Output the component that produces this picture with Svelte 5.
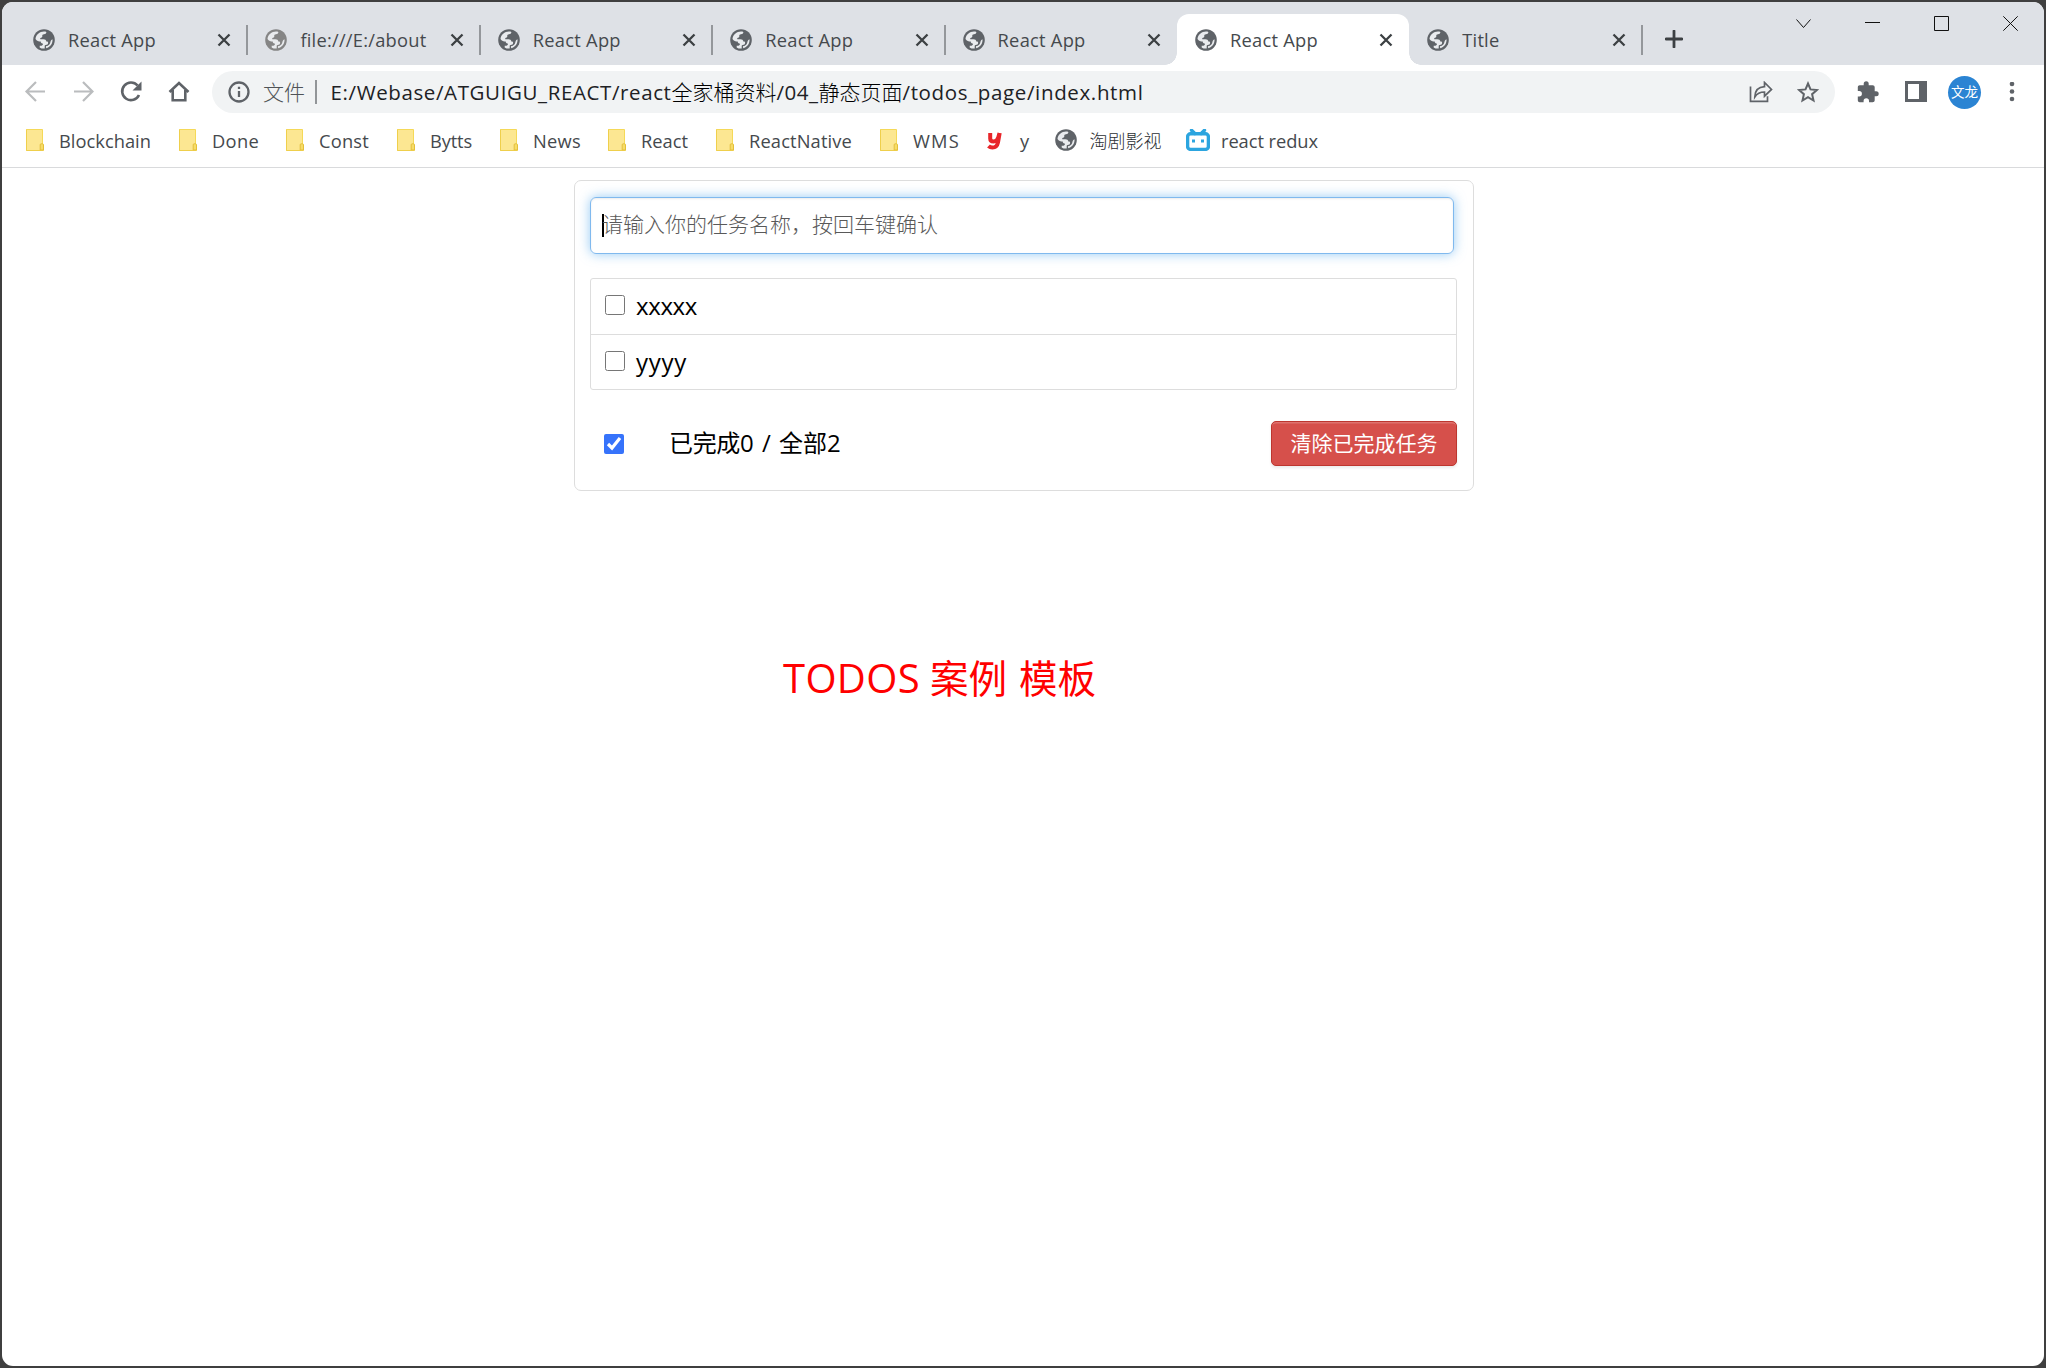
<script>
  const tabs = [
    { title: 'React App', w: 88 },
    { title: 'file:///E:/about', w: 126, muted: true },
    { title: 'React App', w: 88 },
    { title: 'React App', w: 88 },
    { title: 'React App', w: 88 },
    { title: 'React App', w: 88, active: true },
    { title: 'Title', w: 37 }
  ];

  const bookmarks = [
    { label: 'Blockchain', kind: 'folder', w: 92, slot: 153 },
    { label: 'Done', kind: 'folder', w: 47, slot: 107 },
    { label: 'Const', kind: 'folder', w: 50, slot: 111 },
    { label: 'Bytts', kind: 'folder', w: 42, slot: 103 },
    { label: 'News', kind: 'folder', w: 48, slot: 108 },
    { label: 'React', kind: 'folder', w: 47, slot: 108 },
    { label: 'ReactNative', kind: 'folder', w: 103, slot: 164 },
    { label: 'WMS', kind: 'folder', w: 47, slot: 107 },
    { label: 'y', kind: 'y', w: 10, slot: 68 },
    { label: '淘剧影视', kind: 'globe', w: 72, slot: 131 },
    { label: 'react redux', kind: 'tv', w: 97, slot: 140 }
  ];

  const url = [
    { t: 'E:/Webase/ATGUIGU_REACT/react', w: 341 },
    { t: '全家桶资料', w: 105, cjk: true },
    { t: '/04_', w: 42 },
    { t: '静态页面', w: 84, cjk: true },
    { t: '/todos_page/index.html', w: 241 }
  ];

  let todos = $state([
    { name: 'xxxxx', done: false, w: 61 },
    { name: 'yyyy', done: false, w: 51 }
  ]);
  let all = $state(true);

  // Spreads a label's letters so that it occupies the given width.
  function fit(node, width) {
    const natural = node.getBoundingClientRect().width;
    const n = [...node.textContent].length;
    node.style.letterSpacing = `${(width - natural) / n}px`;
  }
</script>

{#snippet globe(muted)}
  <svg class="globe" class:muted viewBox="0 0 22 22">
    <circle cx="11" cy="11" r="10.8" fill="currentColor" />
    <path class="sea" d="M2.5 10C2.800 5.800 6.600 2.500 11 2.500c.9 0 1.700.1 2.400.4-.2 1.500-1 2.200-2.400 2.300-1.300.1-1.900.7-1.700 1.800.1.900-.3 1.600-1.300 1.800-.8.2-.9.600-.7 1.400h3.200c1.700 0 2.700.8 2.800 2.300 1.500 0 1.900.4 1.800 1.500-.1 1.400-1 1.900-2.500 1.900-.6 0-.9.4-.9 1.100v2.500c-1.800.2-3.600-.1-5-1.100v-1.700c2.100.2 3.300-.6 3.400-2-1.500 0-2.300-.8-2.400-2.200-2 0-4-.5-5.200-2.500z" />
    <path class="sea" d="M19.500 10.200c.4 4.200-2.300 8-6.400 9v-2.200c1.700-.1 3.200-1 3.900-2.600.6-1.500.5-3.400 2.500-4.200z" />
  </svg>
{/snippet}

<div class="window">
  <header class="strip">
    <div class="tabs">
      {#each tabs as tab, i}
        <div class="tab" class:active={tab.active} class:nosep={i === 4 || i === 5}>
          {@render globe(tab.muted)}
          <span class="title"><span use:fit={tab.w}>{tab.title}</span></span>
          <svg class="x" viewBox="0 0 14 14"><path d="M1.5 1.5l11 11M12.5 1.5l-11 11" /></svg>
        </div>
      {/each}
    </div>
    <svg class="plus" viewBox="0 0 18 18"><path d="M9 1v16M1 9h16" /></svg>
    <div class="controls">
      <svg viewBox="0 0 15 15"><path d="M.5 3.5l7 8 7-8" /></svg>
      <svg viewBox="0 0 15 15"><path d="M0 6.5h15" /></svg>
      <svg viewBox="0 0 15 15"><path d="M.5.5h14v14H.5z" /></svg>
      <svg viewBox="0 0 15 15"><path d="M.3.3l14.4 14.4M14.7.3L.3 14.7" /></svg>
    </div>
  </header>

  <div class="toolbar">
    <svg class="nav off" viewBox="0 0 22 22"><path d="M21 10.500H3M12 1L2.500 10.500l9.500 9.500" /></svg>
    <svg class="nav off" viewBox="0 0 22 22"><path d="M2 10.500h18M11 1l9.500 9.500-9.500 9.500" /></svg>
    <svg class="nav" viewBox="0 0 22 22">
      <path d="M19 14A8.800 8.800 0 1 1 17.600 4.500" />
      <path class="solid" d="M21.500.5v9h-9z" />
    </svg>
    <svg class="nav" viewBox="0 0 22 22"><path d="M1.500 11L11 2l9.500 9M4.700 9v10.300h12.600V9" /></svg>
    <div class="omnibox">
      <svg class="info" viewBox="0 0 22 22">
        <circle cx="11" cy="11" r="9.500" />
        <path d="M11 10v6M11 5.700v2.400" />
      </svg>
      <span class="scheme">文件</span>
      <span class="bar"></span>
      <span class="url">{#each url as part}<span class:cjk={part.cjk} use:fit={part.w}>{part.t}</span>{/each}</span>
      <svg class="share" viewBox="0 0 24 22">
        <path d="M1.500 5.500v14.800h17v-5" />
        <path d="M15.500 1.500v4.200C9.500 6 6 9.500 5.800 16c2.500-4 5.700-5 9.700-5v4.200l7-6.800z" />
      </svg>
      <svg class="star" viewBox="0 0 22 22"><path d="M11 2.500l2.500 5.900 6.400.6-4.800 4.200 1.400 6.300-5.500-3.300-5.500 3.300 1.400-6.300L2.100 9l6.400-.6z" /></svg>
    </div>
    <svg class="puzzle" viewBox="0 0 22 22">
      <path d="M19.200 10.300h-1.500V6.200c0-1.100-.9-2-2-2h-4V2.800a2.500 2.500 0 0 0-5 0v1.400h-4c-1.100 0-1.900.9-1.900 2V10h1.400a2.700 2.700 0 0 1 0 5.400H.8v3.900c0 1.100.9 2 1.900 2h3.900v-1.400a2.700 2.700 0 0 1 5.400 0v1.400h3.700c1.100 0 2-.9 2-2v-4h1.500a2.500 2.500 0 0 0 0-5z" />
    </svg>
    <svg class="panel" viewBox="0 0 22 22"><path fill-rule="evenodd" d="M0 0h22v21H0zM3 3v15h11V3z" /></svg>
    <div class="avatar">文龙</div>
    <svg class="dots" viewBox="0 0 6 20"><circle cx="3" cy="2" r="2.300" /><circle cx="3" cy="9.500" r="2.300" /><circle cx="3" cy="17" r="2.300" /></svg>
  </div>

  <nav class="bookmarks">
    {#each bookmarks as b}
      <div class="bookmark {b.kind}" style:width="{b.slot}px">
        <span class="ico">
          {#if b.kind === 'folder'}
            <svg class="dir" viewBox="0 0 18 22">
              <path d="M.5.5h16v15l1 1v5H.5z" fill="#fce792" stroke="#f5d958" />
              <path d="M.5.5v21h14" fill="none" stroke="#efcf4c" />
              <path d="M14.200 21v-5.200q0-1 1-1h1.300q1 0 1 1V21z" fill="#f7dc68" stroke="#e3bf3a" />
            </svg>
          {:else if b.kind === 'globe'}
            {@render globe(false)}
          {:else if b.kind === 'tv'}
            <svg class="set" viewBox="0 0 24 22">
              <rect x="1.600" y="4.700" width="20.800" height="15.700" rx="3" />
              <path d="M5.500 1.200l3.300 3.300M18.500 1.200l-3.300 3.300" />
              <path class="eyes" d="M7.500 10.500v3M16.500 10.500v3" />
            </svg>
          {:else}
            <svg class="ylogo" viewBox="0 0 17 19">
              <path d="M3.200 2v5.500q0 3 3.300 3 3.600 0 4.800-4.200L12.500 2M12.700 2L11 11.500q-1 5-5.500 5-2.500 0-4-1.500" />
            </svg>
          {/if}
        </span>
        <span class="label"><span use:fit={b.w}>{b.label}</span></span>
      </div>
    {/each}
  </nav>

  <main>
    <section class="card">
      <div class="entry"><span class="caret"></span><span class="hint">请输入你的任务名称，按回车键确认</span></div>
      <ul>
        {#each todos as todo}
          <li>
            <input type="checkbox" bind:checked={todo.done} />
            <span class="name"><span use:fit={todo.w}>{todo.name}</span></span>
          </li>
        {/each}
      </ul>
      <footer>
        <input type="checkbox" bind:checked={all} />
        <span class="status"><span use:fit={71}>已完成</span><span use:fit={39}>{'0 / '}</span><span use:fit={48}>全部</span><span>2</span></span>
        <button>清除已完成任务</button>
      </footer>
    </section>
    <h1><span class="big" use:fit={137}>TODOS</span><span class="w1">案例</span><span>模板</span></h1>
  </main>
</div>

<style>
  :global(html) { height: 100%; }
  :global(body) {
    box-sizing: border-box;
    height: 100%;
    margin: 0;
    padding: 2px;
    background: #3f3f3f;
    font-family: 'Open Sans', 'Noto Sans CJK SC', sans-serif;
    overflow: hidden;
  }
  svg { display: block; flex: none; }
  .window {
    width: 2042px;
    height: 1364px;
    background: #fff;
    border-radius: 11px;
    overflow: hidden;
    white-space: nowrap;
  }

  .strip { display: flex; height: 63px; background: #dee1e6; }
  .tabs { display: flex; padding-left: 13px; }
  .tab {
    position: relative;
    box-sizing: border-box;
    display: flex;
    align-items: center;
    width: 232.4px;
    height: 51px;
    margin-top: 12px;
    padding: 0 16px 0 18px;
    color: #45494d;
  }
  .tab::after {
    content: '';
    position: absolute;
    right: -1px;
    top: 11px;
    width: 2px;
    height: 30px;
    background: #94979b;
  }
  .tab.nosep::after { display: none; }
  .tab.active { background: #fff; border-radius: 12px 12px 0 0; }
  .tab.active::before,
  .tab.active.nosep::after {
    content: '';
    display: block;
    position: absolute;
    top: auto;
    bottom: 0;
    width: 12px;
    height: 12px;
  }
  .tab.active::before { left: -12px; background: radial-gradient(circle at 0 0, transparent 11.5px, #fff 12px); }
  .tab.active.nosep::after { right: -12px; background: radial-gradient(circle at 100% 0, transparent 11.5px, #fff 12px); }
  .globe { color: #5f6368; }
  svg.globe { width: 22px; height: 22px; }
  .globe.muted { color: #858585; }
  .sea { fill: #e9ebee; }
  .title { flex: 1; padding-left: 13px; font-size: 18.3px; line-height: 24px; }
  .x { width: 14px; height: 14px; fill: none; stroke: #3c4043; stroke-width: 2.3; }
  .plus { width: 18px; height: 18px; margin: 28px 0 0 23px; fill: none; stroke: #3c4043; stroke-width: 2.8; stroke-linecap: round; }
  .controls { display: flex; gap: 54px; margin: 14px 26px 0 auto; }
  .controls svg { width: 15px; height: 15px; fill: none; stroke: #111; stroke-width: 1; }

  .toolbar { display: flex; align-items: center; height: 54px; padding: 0 29px 0 22px; }
  .nav { width: 22px; height: 22px; margin-right: 26px; fill: none; stroke: #5f6368; stroke-width: 2.6; }
  .nav.off { stroke: #babcbe; stroke-width: 2.2; }
  .nav .solid { fill: #5f6368; stroke: none; }
  .omnibox {
    box-sizing: border-box;
    display: flex;
    align-items: center;
    width: 1623px;
    height: 42px;
    margin-left: -4px;
    padding: 0 16px;
    border-radius: 21px;
    background: #f1f3f4;
  }
  .info { width: 22px; height: 22px; fill: none; stroke: #5f6368; stroke-width: 2.3; }
  .scheme { width: 42px; margin-left: 13px; font-size: 21px; line-height: 30px; font-weight: 300; color: #4f5357; }
  .bar { width: 1.5px; height: 24px; margin: 0 14px 0 10px; background: #929598; }
  .url { flex: 1; padding-bottom: 1px; font-size: 20.5px; line-height: 30px; color: #202124; }
  .url .cjk { font-size: 21px; line-height: 24px; font-weight: 300; color: #000; }
  .share { width: 24px; height: 22px; margin-right: 24px; fill: none; stroke: #5f6368; stroke-width: 1.7; }
  .star { width: 22px; height: 22px; fill: none; stroke: #5f6368; stroke-width: 2; }
  .puzzle { width: 22px; height: 22px; margin-left: 22px; fill: #5f6368; }
  .panel { width: 22px; height: 22px; margin-left: 26px; fill: #5f6368; }
  .avatar {
    width: 33px;
    height: 33px;
    margin-left: 21px;
    border-radius: 50%;
    background: #2b84d3;
    color: #fff;
    font-size: 13.5px;
    line-height: 32px;
    text-align: center;
  }
  .dots { width: 6px; height: 20px; margin-left: auto; fill: #5f6368; }

  .bookmarks {
    box-sizing: border-box;
    display: flex;
    height: 49px;
    padding: 10px 0 0 24px;
    border-bottom: 1px solid #d9dadc;
  }
  .bookmark { display: flex; flex: none; align-items: flex-start; height: 22px; }
  .ico { display: flex; width: 33px; height: 22px; align-items: center; }
  .dir { width: 18px; height: 22px; }
  .set { width: 24px; height: 22px; fill: none; stroke: #2ca5df; stroke-width: 3.4; stroke-linecap: round; }
  .set .eyes { stroke-width: 3; stroke-linecap: butt; }
  .ylogo { width: 17px; height: 19px; fill: none; stroke: #e8262a; stroke-width: 4; }
  .label { font-size: 18.3px; line-height: 24px; color: #45494d; }
  .bookmark.globe .label { padding-left: 1.5px; font-size: 18px; font-weight: 300; color: #2c2f33; }
  .bookmark.tv .label { padding-left: 2px; }

  main { display: flow-root; padding-top: 12px; }
  .card {
    box-sizing: border-box;
    width: 900px;
    height: 311px;
    margin-left: 572px;
    padding: 16px 16px 0 15px;
    border: 1px solid #ddd;
    border-radius: 7px;
  }
  .entry {
    box-sizing: border-box;
    display: flex;
    align-items: center;
    width: 864px;
    height: 57px;
    padding-left: 11px;
    border: 1px solid #80b9ee;
    border-radius: 6px;
    box-shadow: inset 0 1px 2px rgba(0, 0, 0, 0.075), 0 0 12px rgba(82, 168, 236, 0.6);
  }
  .caret { width: 2px; height: 23px; background: #000; margin-right: -2px; }
  .hint { padding-bottom: 3px; font-size: 21px; line-height: 30px; font-weight: 300; color: #595959; }
  ul {
    box-sizing: border-box;
    width: 867px;
    height: 112px;
    margin: 24px 0 0;
    padding: 0;
    list-style: none;
    border: 1px solid #ddd;
    border-radius: 3px;
  }
  li { box-sizing: border-box; display: flex; height: 56px; padding-left: 14px; border-bottom: 1px solid #ddd; }
  li:last-child { border-bottom: 0; }
  li input { margin: 16px 0 0; }
  input { width: 20px; height: 20px; margin: 0; accent-color: #3673fb; flex: none; }
  .name { margin-left: 11px; padding-top: 11px; font-size: 24px; line-height: 31px; color: #000; }
  footer { display: flex; align-items: center; height: 45px; margin-top: 31px; padding-left: 14px; }
  .status { margin-left: 45px; padding-bottom: 1px; font-size: 24px; line-height: 36px; color: #000; white-space: pre; }
  button {
    box-sizing: border-box;
    width: 186px;
    height: 45px;
    margin-left: auto;
    padding: 0 0 4px;
    border: 1px solid #bd362f;
    border-radius: 5px;
    background: #d6504b;
    color: #fff;
    font: 21px/30px 'Noto Sans CJK SC', sans-serif;
    box-shadow: inset 0 1.5px 0 rgba(255, 255, 255, 0.2), 0 1.5px 3px rgba(0, 0, 0, 0.08);
  }
  h1 {
    display: flex;
    align-items: baseline;
    margin: 159px 0 0 781px;
    font-size: 38.5px;
    line-height: 56px;
    font-weight: 400;
    color: #f00;
  }
  .big { font-size: 40px; }
  .w1 { margin: 0 12px 0 10px; }
</style>
